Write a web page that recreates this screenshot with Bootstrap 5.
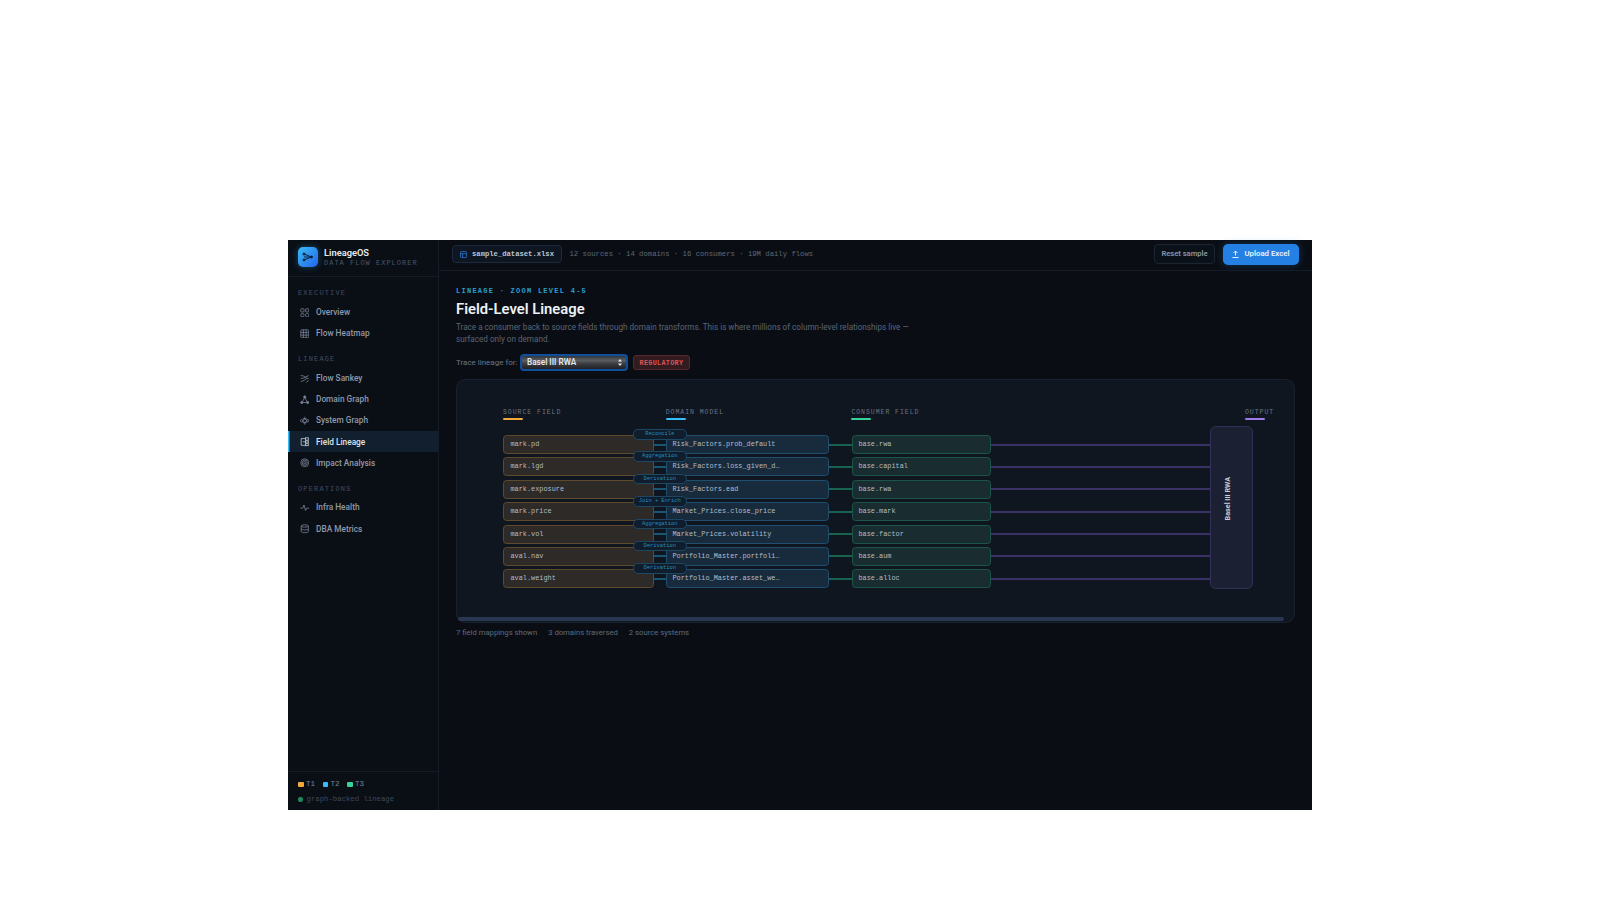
<!DOCTYPE html>
<html lang="en">
<head>
    <meta charset="UTF-8">
    <title>LineageOS - Field-Level Lineage</title>
    <link href="https://cdn.jsdelivr.net/npm/bootstrap@5.3.0/dist/css/bootstrap.min.css" rel="stylesheet">
    <script src="https://cdn.jsdelivr.net/npm/bootstrap@5.3.0/dist/js/bootstrap.bundle.min.js"></script>
    <style>
        html, body { height: 100%; overflow: hidden; }
        body { background: #fff; font-family: "Roboto", "Liberation Sans", sans-serif; color: #c8d0da; }
        .mono { font-family: "Liberation Mono", "DejaVu Sans Mono", monospace; }
        .app-frame { width: 1024px; height: 570px; margin: 240px 0 0 288px; background: #0a0e14; }

        /* sidebar */
        .side { width: 151px; background: #0a0f16; border-right: 1px solid #151c27; }
        .brand { height: 37px; padding: 0 0 2px 10px; gap: 6px; border-bottom: 1px solid #151c27; }
        .logo-box { width: 20px; height: 20px; border-radius: 5px; background: linear-gradient(135deg, #38bdf8, #2563eb); box-shadow: 0 0 6px rgba(56,189,248,.35); }
        .brand-name { font-size: 9.3px; font-weight: 600; line-height: 11px; color: #e6ebf1; }
        .brand-sub { font-size: 7px; letter-spacing: 1px; line-height: 10px; color: #4a5567; }
        .nav-label { font-size: 7px; letter-spacing: 1.15px; line-height: 10px; color: #414d62; padding-left: 10px; }
        .nav-first { margin: 11.3px 0 3.5px; }
        .nav-next { margin: 10px 0 3.5px; }
        .side-link { height: 21.2px; padding-left: 11.5px; gap: 7px; font-size: 8.3px; font-weight: 500; color: #8f99a8; text-decoration: none; }
        .side-link svg { width: 9.5px; height: 9.5px; flex: none; }
        .side-link.on { background: #111f2e; color: #dce3ea; box-shadow: inset 1.5px 0 0 #38bdf8; }
        .side-foot { border-top: 1px solid #151c27; padding: 7px 10px 0; height: 39px; }
        .tier-row { gap: 7.5px; }
        .tier { font-size: 7.5px; color: #7a8595; gap: 2.5px; }
        .tier-dot { width: 5.5px; height: 5.5px; border-radius: 1px; }
        .live-dot { width: 4.5px; height: 4.5px; border-radius: 50%; background: #1f8a5f; }
        .live-txt { font-size: 7.3px; color: #3d4858; }

        /* top bar */
        .top-strip { height: 31px; padding: 0 13px 2px 13px; border-bottom: 1px solid #141b26; }
        .file-chip { height: 17.5px; width: 109.5px; padding-left: 7px; gap: 5px; border: 1px solid #1b2a3d; border-radius: 4px; background: #0e1622; font-size: 7.2px; font-weight: 700; color: #bcc5d0; }
        .stats { font-size: 7.25px; color: #5d6878; margin-left: 8px; }
        .btn-reset { width: 61px; height: 20px; padding: 0; font-size: 7.6px; font-weight: 600; color: #8a95a4; background: #0b1119; border: 1px solid #1c2532; border-radius: 4px; }
        .btn-upload { width: 76px; height: 21px; padding: 0; gap: 5px; font-size: 7.8px; font-weight: 600; color: #e8f2fc; background: #2480e3; border: 0; border-radius: 5px; box-shadow: 0 0 8px rgba(36,128,227,.3); }

        /* page head */
        .page-body { padding: 14.5px 17px 0 17px; }
        .eyebrow { font-size: 7px; font-weight: 700; letter-spacing: 1.26px; line-height: 10px; color: #2b9fd0; }
        .page-title { font-size: 14.8px; font-weight: 600; line-height: 18px; color: #edf1f5; margin: 4px 0 0; }
        .page-desc { font-size: 8.15px; line-height: 12px; color: #5a6576; width: 470px; margin: 3.5px 0 0; }
        .trace-row { margin-top: 9px; height: 17px; gap: 5px; }
        .trace-lbl { font-size: 8px; color: #6a7584; width: 59px; white-space: nowrap; }
        .field-pick { width: 108px; height: 16.5px; font-family: "Roboto", sans-serif; font-size: 8.2px; font-weight: 600; color: #e4e8ec; padding: 0 0 0 5px; border: 2px solid #0f4e9c; border-radius: 4px; appearance: none;
            background: url("data:image/svg+xml,%3Csvg xmlns='http://www.w3.org/2000/svg' width='6' height='9' viewBox='0 0 6 9'%3E%3Cpath d='M3 1 5 3.500H1zM3 8 1 5.500H5z' fill='%23e4e8ec'/%3E%3C/svg%3E") no-repeat right 3px center, linear-gradient(#33363a, #5a5d61 35%, #3a3c40 60%, #1f2125); }
        .tag-reg { font-size: 6.8px; font-weight: 700; letter-spacing: .3px; color: #dc5554; background: #331c20; border: 1px solid #54282c; border-radius: 3px; padding: 2.5px 5.5px; line-height: 8px; }

        /* diagram */
        .flow-card { height: 244px; margin-top: 8px; padding: 27.5px 20px 0 46px; background: #0f1620; border: 1px solid #182130; border-radius: 9px; position: relative; }
        .col-head { font-size: 6.5px; letter-spacing: .96px; line-height: 10px; color: #6a7585; padding-bottom: 2px; }
        .col-head i { display: block; width: 20px; height: 2px; margin-top: .5px; border-radius: 1px; }
        .flow-body { margin-top: 4px; }
        .flow-rows { width: 707px; padding-top: 9px; }
        .flow-row { height: 19px; margin-bottom: 3.4px; display: flex; align-items: center; position: relative; }
        .flow-node { height: 19px; padding-left: 5.5px; font-size: 6.87px; line-height: 17px; color: #b4bcc6; border-radius: 3.5px; white-space: nowrap; flex: none; }
        .n-src { width: 151px; padding-left: 6.5px; background: #2d2a27; border: 1px solid #5d4a2c; }
        .n-dom { width: 162.5px; background: #182b3d; border: 1px solid #1f4e6e; }
        .n-con { width: 138.5px; background: #192c2f; border: 1px solid #1c5549; }
        .wire { height: 2px; flex: none; }
        .w-a { width: 12px; background: #1a5674; }
        .w-b { width: 23.5px; background: #186350; }
        .w-c { flex: 1; background: #3a3166; }
        .xform { position: absolute; left: 130px; top: -6px; width: 53.5px; height: 10.5px; font-size: 5.4px; line-height: 8.5px; text-align: center; color: #2a8dbb; background: #0f1d2c; border: 1px solid #1d4763; border-radius: 5px; }
        .out-box { width: 42.5px; height: 163px; background: #1c2033; border: 1px solid #332f56; border-radius: 6px; padding: 0 5px 18px 0; }
        .out-box span { font-family: "Roboto", sans-serif; writing-mode: vertical-rl; transform: rotate(180deg); font-size: 7.2px; font-weight: 700; color: #c9ced6; }
        .h-scroll { position: absolute; left: 1px; right: 10px; bottom: 1.5px; height: 3.5px; background: #2a3750; border-radius: 2px; }
        .flow-foot { margin-top: 3.5px; gap: 11px; font-size: 7.7px; color: #5f6a7a; }
    </style>
</head>
<body>
    <div class="app-frame d-flex">
        <!-- sidebar -->
        <aside class="side d-flex flex-column flex-shrink-0">
            <div class="brand d-flex align-items-center">
                <div class="logo-box d-flex align-items-center justify-content-center">
                    <svg width="12" height="12" viewBox="0 0 12 12" fill="none" stroke="#0d2238" stroke-width="1"><path d="M2 3 9.500 6 2 9M2 6h7.500"/><circle cx="2" cy="3" r="1" fill="#0d2238"/><circle cx="2" cy="9" r="1" fill="#0d2238"/><circle cx="9.500" cy="6" r="1" fill="#0d2238"/></svg>
                </div>
                <div>
                    <div class="brand-name">LineageOS</div>
                    <div class="brand-sub mono">DATA FLOW EXPLORER</div>
                </div>
            </div>
            <div class="flex-grow-1">
                <div class="nav-label nav-first mono">EXECUTIVE</div>
                <a class="side-link d-flex align-items-center" href="#"><svg viewBox="0 0 12 12" fill="none" stroke="#79849a"><rect x="1" y="1" width="4" height="4" rx=".6"/><rect x="7" y="1" width="4" height="4" rx=".6"/><rect x="1" y="7" width="4" height="4" rx="1.500"/><rect x="7" y="7" width="4" height="4" rx="1.500"/></svg>Overview</a>
                <a class="side-link d-flex align-items-center" href="#"><svg viewBox="0 0 12 12" fill="none" stroke="#79849a"><rect x="1" y="1" width="10" height="10" rx="1.500"/><path d="M1 4.300h10M1 7.700h10M4.300 1v10M7.700 1v10"/></svg>Flow Heatmap</a>
                <div class="nav-label nav-next mono">LINEAGE</div>
                <a class="side-link d-flex align-items-center" href="#"><svg viewBox="0 0 12 12" fill="none" stroke="#79849a"><path d="M1 2c4 0 5 1.500 7 3l3 1M1 5.500c3 0 5-.5 6.500-2L11 2M1 9.500c3.500 0 5-3 7.500-3.500M8 10.500 11 8"/></svg>Flow Sankey</a>
                <a class="side-link d-flex align-items-center" href="#"><svg viewBox="0 0 12 12" fill="none" stroke="#79849a"><path d="M6 3 2.500 9.500h7z"/><circle cx="6" cy="2.500" r="1.400" fill="#79849a"/><circle cx="2.200" cy="9.500" r="1.400" fill="#79849a"/><circle cx="9.800" cy="9.500" r="1.400" fill="#79849a"/></svg>Domain Graph</a>
                <a class="side-link d-flex align-items-center" href="#"><svg viewBox="0 0 12 12" fill="none" stroke="#79849a"><circle cx="6" cy="6" r="2.200"/><circle cx="2" cy="6" r="1.500"/><circle cx="10" cy="6" r="1.500"/><path d="M6 1v2.800M6 8.200V11M3.500 3.500h5M3.500 8.500h5"/></svg>System Graph</a>
                <a class="side-link on d-flex align-items-center" href="#"><svg viewBox="0 0 12 12" fill="none" stroke="#c5ced8"><path d="M7 2H1.500v8.500H7"/><rect x="7" y="1" width="3.500" height="3"/><rect x="7" y="5" width="3.500" height="2.500"/><rect x="7" y="8.500" width="3.500" height="2.500"/><path d="M3.500 6H7"/></svg>Field Lineage</a>
                <a class="side-link d-flex align-items-center" href="#"><svg viewBox="0 0 12 12" fill="none" stroke="#79849a"><circle cx="6" cy="6" r="5"/><circle cx="6" cy="6" r="3.200"/><circle cx="6" cy="6" r="1.400"/></svg>Impact Analysis</a>
                <div class="nav-label nav-next mono">OPERATIONS</div>
                <a class="side-link d-flex align-items-center" href="#"><svg viewBox="0 0 12 12" fill="none" stroke="#79849a"><path d="M.5 6.500h3l1.500-4 2 7 1.500-3h3"/></svg>Infra Health</a>
                <a class="side-link d-flex align-items-center" href="#"><svg viewBox="0 0 12 12" fill="none" stroke="#79849a"><ellipse cx="6" cy="2.500" rx="4.500" ry="1.500"/><path d="M1.500 2.500v7c0 .8 2 1.500 4.500 1.500s4.500-.7 4.500-1.500v-7M1.500 6c0 .8 2 1.500 4.500 1.500s4.500-.7 4.500-1.500"/></svg>DBA Metrics</a>
            </div>
            <div class="side-foot">
                <div class="d-flex tier-row mono">
                    <span class="d-flex align-items-center tier"><span class="tier-dot" style="background:#f0a93a"></span>T1</span>
                    <span class="d-flex align-items-center tier"><span class="tier-dot" style="background:#38bdf8"></span>T2</span>
                    <span class="d-flex align-items-center tier"><span class="tier-dot" style="background:#34d399"></span>T3</span>
                </div>
                <div class="d-flex align-items-center gap-1 mt-1">
                    <span class="live-dot"></span><span class="live-txt mono">graph-backed lineage</span>
                </div>
            </div>
        </aside>

        <!-- main -->
        <main class="flex-grow-1 d-flex flex-column">
            <div class="top-strip d-flex align-items-center">
                <div class="file-chip mono d-flex align-items-center">
                    <svg width="7" height="7" viewBox="0 0 8 8" fill="none" stroke="#2f6fc0"><rect x=".5" y=".5" width="7" height="7" rx="1"/><path d="M.5 3h7M3 3v4.500"/></svg>
                    sample_dataset.xlsx
                </div>
                <div class="stats mono">12 sources · 14 domains · 16 consumers · 19M daily flows</div>
                <div class="ms-auto d-flex align-items-center gap-2">
                    <button class="btn btn-reset" type="button">Reset sample</button>
                    <button class="btn btn-upload d-flex align-items-center justify-content-center" type="button">
                        <svg width="7" height="8" viewBox="0 0 7 8" fill="none" stroke="#e8f2fc"><path d="M3.500 5.500V1M1.500 3 3.500 1l2 2M.5 7.500h6"/></svg>
                        Upload Excel
                    </button>
                </div>
            </div>

            <div class="page-body">
                <div class="eyebrow mono">LINEAGE · ZOOM LEVEL 4-5</div>
                <h1 class="page-title">Field-Level Lineage</h1>
                <p class="page-desc">Trace a consumer back to source fields through domain transforms. This is where millions of column-level relationships live — surfaced only on demand.</p>
                <div class="trace-row d-flex align-items-center">
                    <span class="trace-lbl">Trace lineage for:</span>
                    <select class="field-pick"><option>Basel III RWA</option></select>
                    <span class="tag-reg mono">REGULATORY</span>
                </div>

                <div class="flow-card">
                    <div class="d-flex mono">
                        <div class="col-head" style="width:162.700px">SOURCE FIELD<i style="background:#f0a93a"></i></div>
                        <div class="col-head" style="width:185.700px">DOMAIN MODEL<i style="background:#38bdf8"></i></div>
                        <div class="col-head">CONSUMER FIELD<i style="background:#34d399"></i></div>
                        <div class="col-head ms-auto" style="width:29px">OUTPUT<i style="background:#9f7aea"></i></div>
                    </div>
                    <div class="flow-body d-flex mono">
                        <div class="flow-rows" id="flowRows"></div>
                        <div class="out-box d-flex align-items-center justify-content-center"><span>Basel III RWA</span></div>
                    </div>
                    <div class="h-scroll"></div>
                </div>
                <div class="flow-foot d-flex">
                    <span>7 field mappings shown</span>
                    <span>3 domains traversed</span>
                    <span>2 source systems</span>
                </div>
            </div>
        </main>
    </div>

    <script>
        var mappings = [
            ['mark.pd', 'Risk_Factors.prob_default', 'base.rwa', 'Reconcile'],
            ['mark.lgd', 'Risk_Factors.loss_given_d…', 'base.capital', 'Aggregation'],
            ['mark.exposure', 'Risk_Factors.ead', 'base.rwa', 'Derivation'],
            ['mark.price', 'Market_Prices.close_price', 'base.mark', 'Join + Enrich'],
            ['mark.vol', 'Market_Prices.volatility', 'base.factor', 'Aggregation'],
            ['aval.nav', 'Portfolio_Master.portfoli…', 'base.aum', 'Derivation'],
            ['aval.weight', 'Portfolio_Master.asset_we…', 'base.alloc', 'Derivation']
        ];
        document.getElementById('flowRows').innerHTML = mappings.map(function (m) {
            return '<div class="flow-row">' +
                '<div class="flow-node n-src">' + m[0] + '</div><div class="wire w-a"></div>' +
                '<div class="flow-node n-dom">' + m[1] + '</div><div class="wire w-b"></div>' +
                '<div class="flow-node n-con">' + m[2] + '</div><div class="wire w-c"></div>' +
                '<div class="xform">' + m[3] + '</div></div>';
        }).join('');
    </script>
</body>
</html>
